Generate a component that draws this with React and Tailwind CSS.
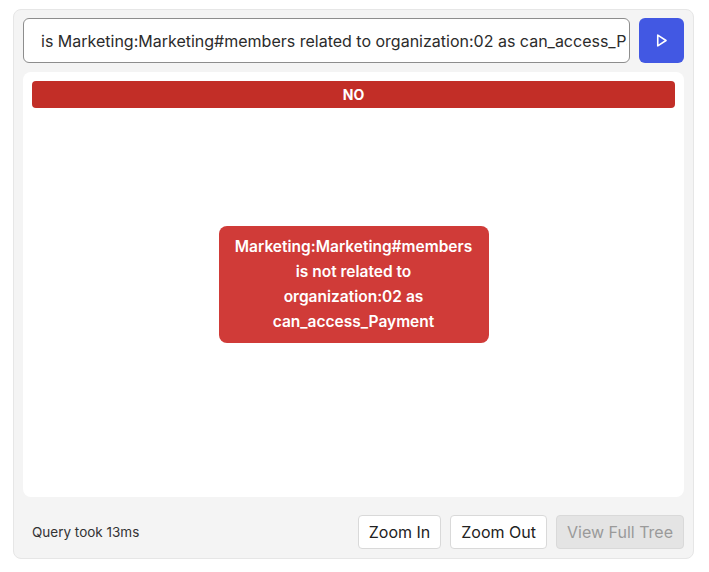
import React from 'react';

export default function App() {
  const query = 'is Marketing:Marketing#members related to organization:02 as can_access_Payment';

  return (
    <div className="bg-white w-[709px] h-[572px] pt-[9px] pl-[13px]" style={{ fontFamily: 'Inter, "Noto Sans", sans-serif' }}>
      <div className="w-[681px] h-[550px] bg-[#f4f4f4] border border-[#e6e6e6] rounded-lg px-[9px] pt-[8px] flex flex-col">
        <div className="flex gap-[9px]">
          <div className="flex-1 h-[45px] bg-white border border-[#8d8d8d] rounded-md pl-[17px] pr-[2px] flex items-center overflow-hidden">
            <span className="text-[16px] text-[#2b2b2b] whitespace-nowrap overflow-hidden">{query}</span>
          </div>
          <button className="w-[45px] h-[45px] bg-[#4258e3] rounded-md flex items-center justify-center">
            <svg width="15" height="15" viewBox="0 0 14 14" fill="none" stroke="white" strokeWidth="1.5" strokeLinejoin="round">
              <path d="M3.5 2 L11.2 7 L3.5 12 Z" />
            </svg>
          </button>
        </div>

        <div className="mt-[9px] h-[425px] bg-white rounded-lg p-[9px] flex flex-col">
          <div className="h-[27px] bg-[#c22e27] rounded-[4px] flex items-center justify-center text-white text-[14px] font-bold">
            NO
          </div>
          <div className="flex-1 flex items-center justify-center pb-[28px]">
            <div className="w-[270px] h-[117px] bg-[#d03b38] rounded-lg flex flex-col items-center justify-center text-white text-[15.5px] font-semibold leading-[25px] text-center">
              <span>Marketing:Marketing#members</span>
              <span>is not related to</span>
              <span>organization:02 as</span>
              <span>can_access_Payment</span>
            </div>
          </div>
        </div>

        <div className="flex items-center mt-[18px]">
          <span className="pl-[9px] text-[13.5px] text-[#333]">Query took 13ms</span>
          <div className="ml-auto flex gap-[9px]">
            <button className="h-[34px] px-[10px] bg-white border border-[#d9d9d9] rounded-[4px] text-[16px] text-[#222]">Zoom In</button>
            <button className="h-[34px] px-[10px] bg-white border border-[#d9d9d9] rounded-[4px] text-[16px] text-[#222]">Zoom Out</button>
            <button className="h-[34px] px-[10px] bg-[#e4e4e4] border border-[#d9d9d9] rounded-[4px] text-[16px] text-[#9a9a9a]">View Full Tree</button>
          </div>
        </div>
      </div>
    </div>
  );
}
